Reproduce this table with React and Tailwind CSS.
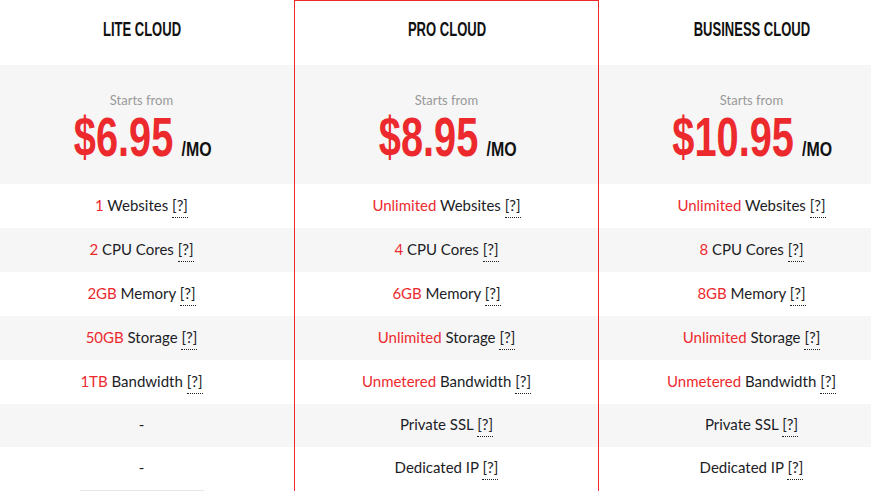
const plans = [
  {
    name: 'LITE CLOUD',
    price: '$6.95',
    features: [
      ['1', 'Websites'],
      ['2', 'CPU Cores'],
      ['2GB', 'Memory'],
      ['50GB', 'Storage'],
      ['1TB', 'Bandwidth'],
      null,
      null,
    ],
  },
  {
    name: 'PRO CLOUD',
    price: '$8.95',
    featured: true,
    features: [
      ['Unlimited', 'Websites'],
      ['4', 'CPU Cores'],
      ['6GB', 'Memory'],
      ['Unlimited', 'Storage'],
      ['Unmetered', 'Bandwidth'],
      ['', 'Private SSL'],
      ['', 'Dedicated IP'],
    ],
  },
  {
    name: 'BUSINESS CLOUD',
    price: '$10.95',
    features: [
      ['Unlimited', 'Websites'],
      ['8', 'CPU Cores'],
      ['8GB', 'Memory'],
      ['Unlimited', 'Storage'],
      ['Unmetered', 'Bandwidth'],
      ['', 'Private SSL'],
      ['', 'Dedicated IP'],
    ],
  },
]

// Oswald-ish look: bold Liberation Sans squeezed horizontally
const condensed = "font-['Liberation_Sans','Arial',sans-serif] font-bold"

function Feature({ item, index }) {
  const bg = index % 2 === 1 ? 'bg-[#f6f6f6]' : 'bg-white'
  const h = index >= 5 ? 'h-[43px]' : 'h-[44px]'
  return (
    <div className={`${h} flex items-center justify-center text-[15px] text-[#1c1d26] ${bg}`}>
      {item ? (
        <span className="-mt-[2px]">
          {item[0] && <span className="text-[#ec2a2e]">{item[0]} </span>}
          {item[1]}{' '}
          <span className="border-b border-dotted border-[#222] pb-[3px]">[?]</span>
        </span>
      ) : (
        <span className="-mt-[2px]">-</span>
      )}
    </div>
  )
}

function Plan({ plan, last }) {
  return (
    <div className={`w-[305px] shrink-0 ${plan.featured ? 'border border-[#ec2a2e]' : ''}`}>
      <div className={`${plan.featured ? 'h-[64px]' : 'h-[65px]'} flex items-center justify-center`}>
        <h2 className={`${condensed} text-[21px] text-[#111] scale-x-[0.62] -mt-[8px] whitespace-nowrap`}>
          {plan.name}
        </h2>
      </div>
      <div className="h-[119px] bg-[#f6f6f6] flex flex-col items-center pt-[26px]">
        <div className="text-[13px] text-[#999] leading-[18px]">Starts from</div>
        <div className="flex items-baseline scale-x-[0.71] mt-[4px] whitespace-nowrap">
          <span className={`${condensed} text-[56px] leading-[48px] text-[#ec2a2e]`}>
            {plan.price}
          </span>
          <span className={`${condensed} text-[20px] leading-[20px] text-[#111] ml-[14px] scale-x-[1.12]`}>
            /MO
          </span>
        </div>
      </div>
      {plan.features.map((f, i) => (
        <Feature key={i} item={f} index={i} />
      ))}
      {last && (
        <div className="mx-auto w-[124px] h-[40px] border-t border-[#e6e6e6] bg-white" />
      )}
    </div>
  )
}

export default function App() {
  return (
    <div className="w-[871px] h-[491px] overflow-hidden bg-white font-['Lato','Open_Sans',sans-serif]">
      <div className="flex -ml-[11px] w-[915px]">
        {plans.map((p, i) => (
          <Plan key={p.name} plan={p} last={i === 0} />
        ))}
      </div>
    </div>
  )
}
